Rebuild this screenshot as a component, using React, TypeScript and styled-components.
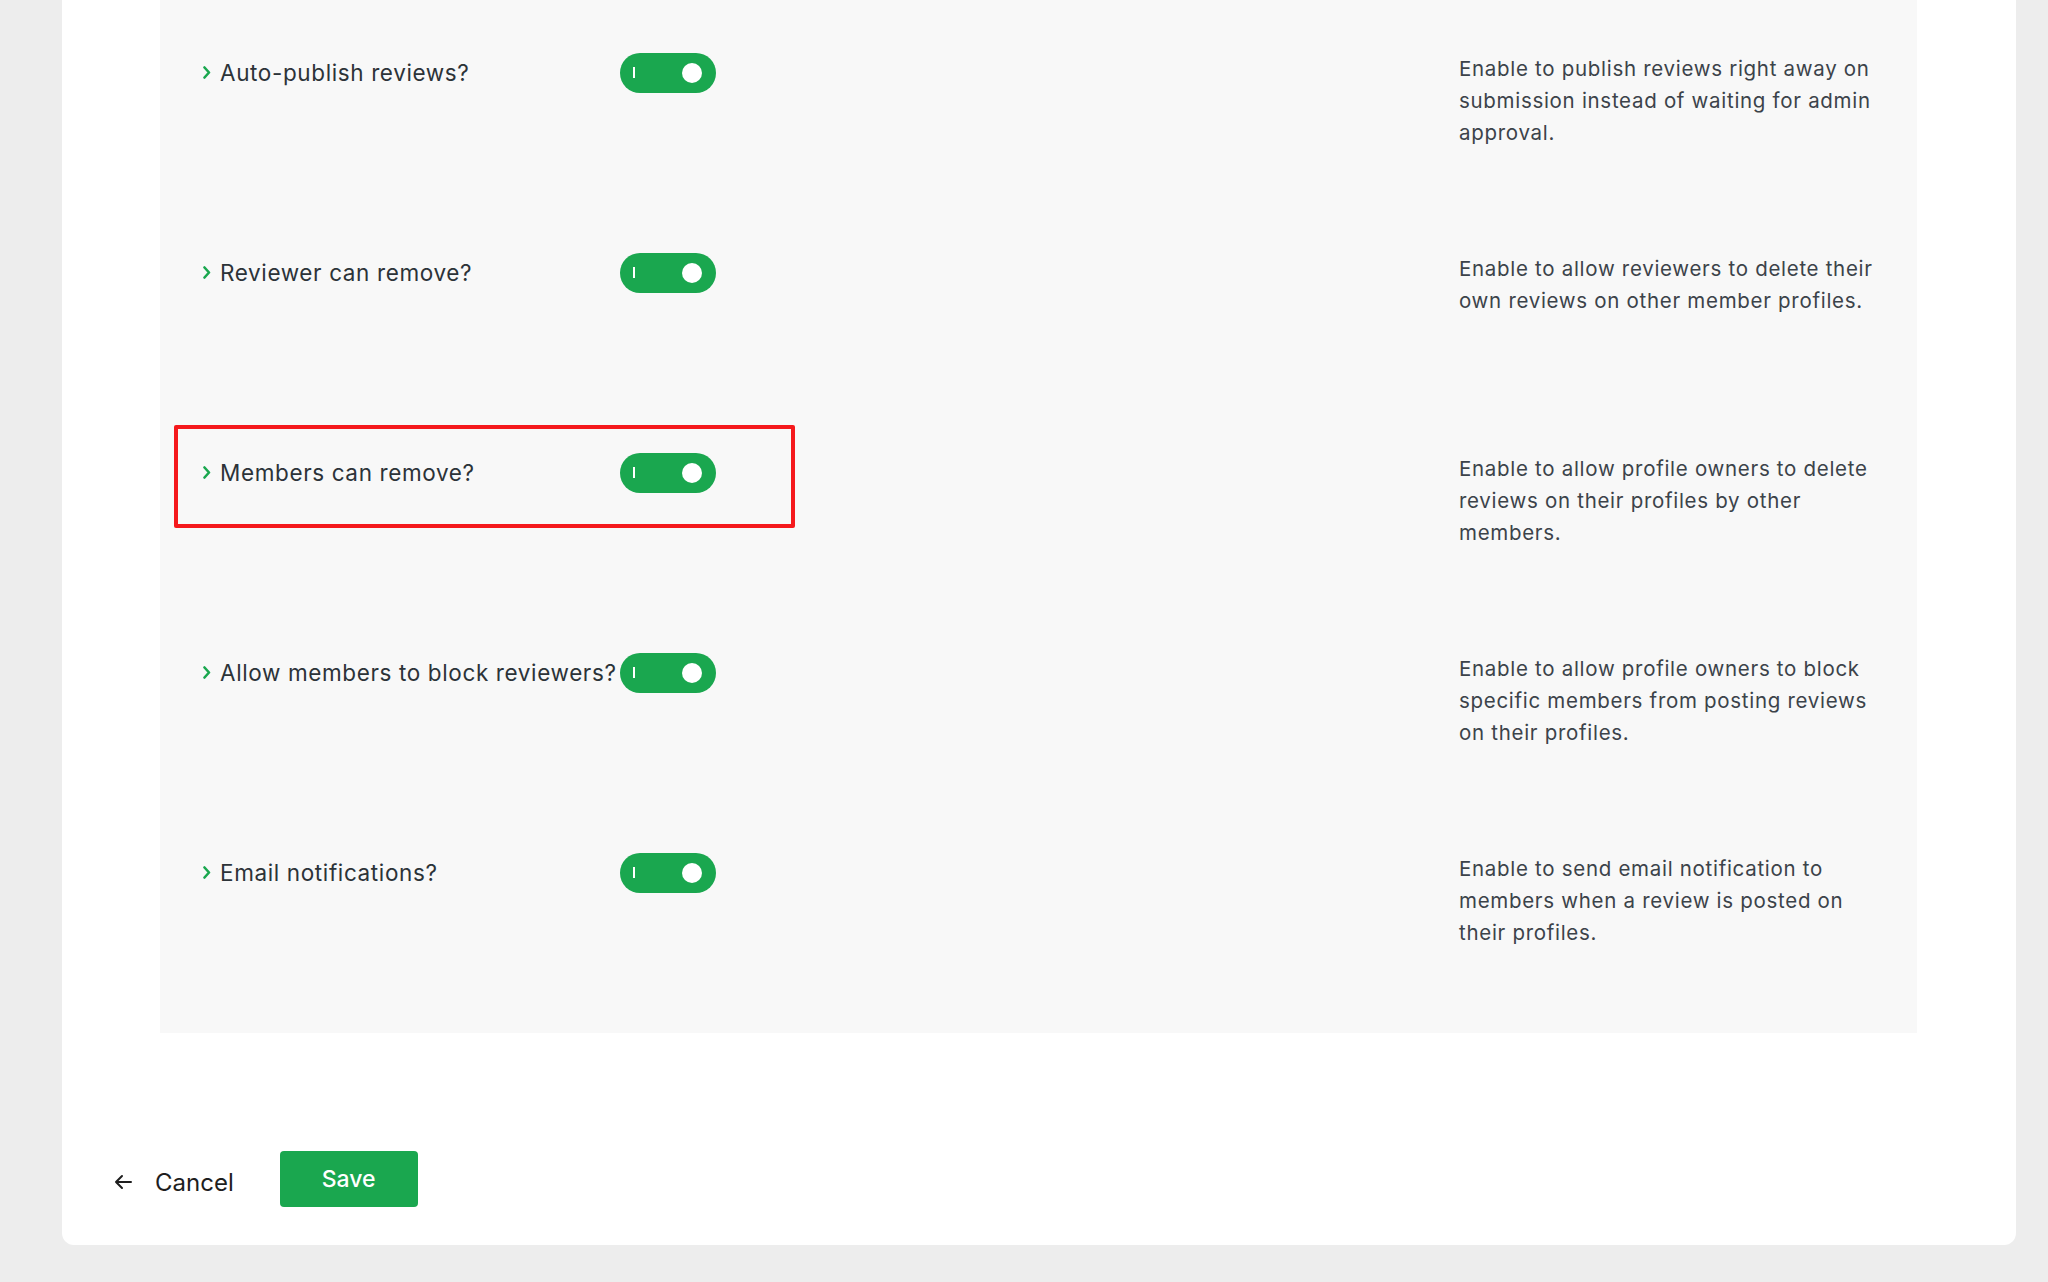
import React from "react";
import styled, { createGlobalStyle } from "styled-components";

const Global = createGlobalStyle`
  html, body { margin: 0; padding: 0; background: #ededed; }
  body { font-family: Inter, "Noto Sans", "Liberation Sans", sans-serif; -webkit-font-smoothing: antialiased; }
  * { box-sizing: border-box; }
`;

const GREEN = "#1aa74f";

const Page = styled.div`
  padding: 0 32px 37px 62px;
  min-height: 1282px;
`;

const Card = styled.div`
  background: #ffffff;
  border-radius: 0 0 12px 12px;
`;

const Panel = styled.div`
  margin: 0 99px 0 98px;
  background: #f8f8f8;
  padding: 25px 28px 8px 14px;
`;

const Row = styled.div`
  display: flex;
  align-items: flex-start;
  min-height: 200px;
`;

const Cell = styled.div<{ $highlight?: boolean }>`
  width: 621px;
  display: flex;
  align-items: center;
  padding: 28px 0 35px 29px;
  border-radius: 2px;
  box-shadow: ${(p) => (p.$highlight ? "inset 0 0 0 4px #f5191c" : "none")};
`;

const Label = styled.div`
  width: 417px;
  height: 40px;
  padding-bottom: 2px;
  display: flex;
  align-items: center;
  gap: 9px;
  white-space: nowrap;
  font-size: 22.5px;
  color: #2c3338;
  letter-spacing: 0.62px;
`;

const Chevron = styled.svg`
  flex: none;
  width: 8px;
  height: 13px;
`;

const Toggle = styled.div`
  position: relative;
  flex: none;
  width: 96px;
  height: 40px;
  border-radius: 20px;
  background: ${GREEN};
`;

const ToggleMark = styled.span`
  position: absolute;
  left: 13px;
  top: 14px;
  width: 2px;
  height: 11px;
  background: #ffffff;
`;

const Knob = styled.span`
  position: absolute;
  right: 14px;
  top: 10px;
  width: 20px;
  height: 20px;
  border-radius: 50%;
  background: #ffffff;
`;

const Description = styled.p`
  margin: 28px 0 0 auto;
  width: 430px;
  font-size: 20.5px;
  line-height: 32px;
  letter-spacing: 0.7px;
  color: #3c434a;
`;

const Footer = styled.div`
  display: flex;
  align-items: center;
  padding: 118px 52px 38px;
`;

const CancelLink = styled.a`
  display: flex;
  align-items: center;
  gap: 23px;
  margin-top: 6px;
  font-size: 24px;
  color: #1e1e1e;
  text-decoration: none;
  cursor: pointer;
`;

const SaveButton = styled.button`
  margin-left: 46px;
  height: 56px;
  padding: 0 42px;
  border: none;
  border-radius: 4px;
  background: ${GREEN};
  color: #ffffff;
  font-family: inherit;
  font-size: 23px;
  font-weight: 500;
  cursor: pointer;
`;

const settings = [
  {
    label: "Auto-publish reviews?",
    desc: "Enable to publish reviews right away on submission instead of waiting for admin approval.",
  },
  {
    label: "Reviewer can remove?",
    desc: "Enable to allow reviewers to delete their own reviews on other member profiles.",
  },
  {
    label: "Members can remove?",
    desc: "Enable to allow profile owners to delete reviews on their profiles by other members.",
    highlight: true,
  },
  {
    label: "Allow members to block reviewers?",
    desc: "Enable to allow profile owners to block specific members from posting reviews on their profiles.",
  },
  {
    label: "Email notifications?",
    desc: "Enable to send email notification to members when a review is posted on their profiles.",
  },
];

export default function App() {
  return (
    <>
      <Global />
      <Page>
        <Card>
          <Panel>
            {settings.map((s) => (
              <Row key={s.label}>
                <Cell $highlight={s.highlight}>
                  <Label>
                    <Chevron viewBox="0 0 8 13">
                      <path d="M1.5 1.5 L6 6.5 L1.5 11.5" fill="none" stroke={GREEN} strokeWidth="2.6" strokeLinecap="round" strokeLinejoin="round" />
                    </Chevron>
                    <span>{s.label}</span>
                  </Label>
                  <Toggle>
                    <ToggleMark />
                    <Knob />
                  </Toggle>
                </Cell>
                <Description>{s.desc}</Description>
              </Row>
            ))}
          </Panel>
          <Footer>
            <CancelLink>
              <svg width="18" height="16" viewBox="0 0 18 16">
                <path d="M17 8 H2 M8 2 L2 8 L8 14" fill="none" stroke="#1e1e1e" strokeWidth="2" strokeLinecap="round" strokeLinejoin="round" />
              </svg>
              <span>Cancel</span>
            </CancelLink>
            <SaveButton>Save</SaveButton>
          </Footer>
        </Card>
      </Page>
    </>
  );
}
